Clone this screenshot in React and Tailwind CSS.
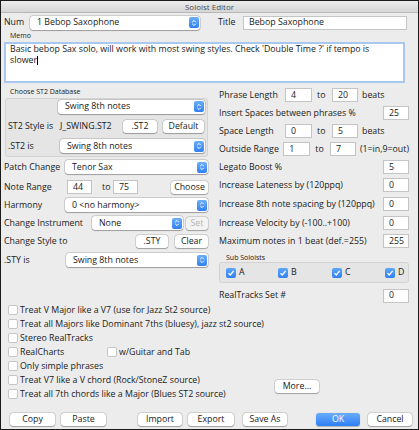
import React from "react";

function Stepper() {
  return (
    <span className="w-[10px] h-[11px] shrink-0 rounded-[2px] bg-gradient-to-b from-[#6caef9] to-[#2f80f4] flex items-center justify-center">
      <svg width="6" height="8" viewBox="0 0 6 8">
        <path d="M1.2 3.2 L3 1.4 L4.8 3.2 M1.2 4.8 L3 6.6 L4.8 4.8" stroke="white" strokeWidth="1" fill="none" />
      </svg>
    </span>
  );
}

function Select({ className, children }) {
  return (
    <div className={"h-[14px] shrink-0 bg-white rounded-[3px] shadow-[0_0_0_0.5px_rgba(0,0,0,0.22),0_0.5px_1px_rgba(0,0,0,0.25)] flex items-center pl-[7px] pr-[1px] " + className}>
      <span className="flex-1">{children}</span>
      <Stepper />
    </div>
  );
}

function Field({ className, children }) {
  return (
    <div className={"h-[14px] shrink-0 bg-white border border-[#c4c4c4] flex items-center pl-[5px] " + className}>
      {children}
    </div>
  );
}

function Btn({ className, children, disabled }) {
  return (
    <div
      className={
        "h-[13px] shrink-0 rounded-[3px] flex items-center justify-center shadow-[0_0_0_0.5px_rgba(0,0,0,0.2),0_0.5px_1px_rgba(0,0,0,0.25)] " +
        (disabled ? "bg-[#f3f3f3] text-[#b3b3b3] " : "bg-white ") +
        className
      }
    >
      {children}
    </div>
  );
}

function Check({ checked }) {
  if (checked) {
    return (
      <span className="w-[10px] h-[10px] shrink-0 rounded-[2px] bg-gradient-to-b from-[#5fa6f8] to-[#2f80f4] flex items-center justify-center">
        <svg width="8" height="8" viewBox="0 0 8 8">
          <path d="M1.5 4.2 L3.3 6 L6.6 1.8" stroke="white" strokeWidth="1.3" fill="none" />
        </svg>
      </span>
    );
  }
  return <span className="w-[10px] h-[10px] shrink-0 rounded-[2px] bg-white border border-[#c6c6c6]" />;
}

const options = [
  "Treat V Major like a V7 (use for Jazz St2 source)",
  "Treat all Majors like Dominant 7ths (bluesy), jazz st2 source)",
  "Stereo RealTracks",
  null,
  "Only simple phrases",
  "Treat V7 like a V chord (Rock/StoneZ source)",
  "Treat all 7th chords like a Major (Blues ST2 source)",
];

export default function App() {
  return (
    <div className="w-[419px] h-[430px] bg-[#ececec] border border-[#1a1a1a] flex flex-col overflow-hidden text-[8.8px] leading-[11px] text-[#1a1a1a] font-['Open_Sans',sans-serif] whitespace-nowrap">
      {/* Title bar */}
      <div className="h-[12px] shrink-0 bg-gradient-to-b from-[#ececec] to-[#d6d6d6] border-b border-[#b8b8b8] flex items-center justify-center text-[8px] text-[#4c4c4c]">
        Soloist Editor
      </div>

      <div className="flex-1 flex flex-col pl-[3px]">
        {/* Num / Title */}
        <div className="mt-[2px] h-[15px] flex items-center">
          <span className="w-[26px]">Num</span>
          <Select className="w-[170px]">1 Bebop Saxophone</Select>
          <span className="ml-[18px] w-[25px]">Title</span>
          <Field className="w-[164px]">Bebop Saxophone</Field>
        </div>

        {/* Memo */}
        <div className="h-[10px] flex items-center pl-[6px] text-[7px]">Memo</div>
        <div className="mt-[2px] h-[41px] w-[401px] bg-white border-2 border-[#a9c8f0] px-[4px] leading-[11px]">
          Basic bebop Sax solo, will work with most swing styles. Check 'Double Time ?' if tempo is
          <br />
          slower
          <span className="inline-block w-[1px] h-[9px] bg-black align-middle" />
        </div>

        {/* Two columns */}
        <div className="mt-[3px] flex">
          {/* Left */}
          <div className="w-[205px] flex flex-col">
            <div className="h-[11px] flex items-center pl-[6px] text-[7px]">Choose ST2 Database</div>
            <div className="mt-[1px] ml-[1px] w-[203px] h-[59px] bg-[#e5e5e5] border border-[#d3d3d3] rounded-[3px] flex flex-col">
              <div className="h-[15px] flex items-center pl-[52px]">
                <Select className="w-[147px]">Swing 8th notes</Select>
              </div>
              <div className="mt-[5px] h-[14px] flex items-center pl-[2px]">
                <span className="w-[52px]">ST2 Style is</span>
                <span className="w-[63px]">J_SWING.ST2</span>
                <Btn className="w-[34px]">.ST2</Btn>
                <Btn className="ml-[6px] w-[41px]">Default</Btn>
              </div>
              <div className="mt-[6px] h-[14px] flex items-center pl-[2px]">
                <span className="w-[52px]">.ST2 is</span>
                <Select className="w-[145px]">Swing 8th notes</Select>
              </div>
            </div>

            <div className="mt-[3px] h-[14px] flex items-center">
              <span className="w-[61px]">Patch Change</span>
              <Select className="w-[143px]">Tenor Sax</Select>
            </div>
            <div className="mt-[6px] h-[14px] flex items-center pr-[1px]">
              <span className="w-[63px]">Note Range</span>
              <Field className="w-[25px]">44</Field>
              <span className="ml-[10px] w-[11px]">to</span>
              <Field className="w-[25px]">75</Field>
              <Btn className="ml-auto w-[37px]">Choose</Btn>
            </div>
            <div className="mt-[4px] h-[14px] flex items-center">
              <span className="w-[61px]">Harmony</span>
              <Select className="w-[143px]">0 &lt;no harmony&gt;</Select>
            </div>
            <div className="mt-[4px] h-[14px] flex items-center">
              <span className="w-[88px]">Change Instrument</span>
              <Select className="w-[91px]">None</Select>
              <Btn disabled className="ml-[3px] w-[22px]">Set</Btn>
            </div>
            <div className="mt-[4px] h-[14px] flex items-center pr-[1px]">
              <span>Change Style to</span>
              <Btn className="ml-auto w-[32px]">.STY</Btn>
              <Btn className="ml-[7px] w-[33px]">Clear</Btn>
            </div>
            <div className="mt-[5px] h-[14px] flex items-center">
              <span className="w-[62px]">.STY is</span>
              <Select className="w-[142px]">Swing 8th notes</Select>
            </div>
          </div>

          {/* Right */}
          <div className="ml-[10px] w-[190px] flex flex-col">
            <div className="h-[18px] flex items-center">
              <span className="w-[66px]">Phrase Length</span>
              <Field className="w-[27px]">4</Field>
              <span className="ml-[5px] w-[15px]">to</span>
              <Field className="w-[26px]">20</Field>
              <span className="ml-[4px]">beats</span>
            </div>
            <div className="h-[18px] flex items-center">
              <span>Insert Spaces between phrases %</span>
              <Field className="ml-auto w-[26px]">25</Field>
            </div>
            <div className="h-[18px] flex items-center">
              <span className="w-[66px]">Space Length</span>
              <Field className="w-[27px]">0</Field>
              <span className="ml-[5px] w-[15px]">to</span>
              <Field className="w-[26px]">5</Field>
              <span className="ml-[4px]">beats</span>
            </div>
            <div className="h-[18px] flex items-center">
              <span className="w-[66px]">Outside Range</span>
              <Field className="w-[27px]">1</Field>
              <span className="ml-[5px] w-[15px]">to</span>
              <Field className="w-[26px]">7</Field>
              <span className="ml-[4px]">(1=in,9=out)</span>
            </div>
            <div className="h-[18px] flex items-center">
              <span>Legato Boost %</span>
              <Field className="ml-auto w-[26px]">5</Field>
            </div>
            <div className="h-[18px] flex items-center">
              <span>Increase Lateness by (120ppq)</span>
              <Field className="ml-auto w-[26px]">0</Field>
            </div>
            <div className="h-[20px] flex items-center">
              <span>Increase 8th note spacing by (120ppq)</span>
              <Field className="ml-auto w-[26px]">0</Field>
            </div>
            <div className="h-[18px] flex items-center">
              <span>Increase Velocity by (-100..+100)</span>
              <Field className="ml-auto w-[26px]">0</Field>
            </div>
            <div className="h-[18px] flex items-center">
              <span>Maximum notes in 1 beat (def.=255)</span>
              <Field className="ml-auto w-[26px]">255</Field>
            </div>
            <div className="mt-[2px] h-[10px] flex items-center pl-[7px] text-[7px]">Sub Soloists</div>
            <div className="h-[21px] w-[190px] bg-[#e5e5e5] border border-[#d3d3d3] rounded-[3px] flex items-center pl-[6px]">
              {["A", "B", "C", "D"].map((l, i) => (
                <div key={l} className={"flex items-center " + (i === 0 ? "w-[52px]" : i === 1 ? "w-[54px]" : i === 2 ? "w-[53px]" : "")}>
                  <Check checked />
                  <span className="ml-[3px]">{l}</span>
                </div>
              ))}
            </div>
            <div className="mt-[5px] h-[15px] flex items-center">
              <span>RealTracks Set #</span>
              <Field className="ml-auto w-[26px]">0</Field>
            </div>
          </div>
        </div>

        {/* Checkbox options */}
        <div className="flex pl-[4px]">
          <div className="w-[266px] flex flex-col">
            {options.map((o, i) =>
              o ? (
                <div key={i} className="h-[14px] flex items-center">
                  <Check />
                  <span className="ml-[2px]">{o}</span>
                </div>
              ) : (
                <div key={i} className="h-[14px] flex items-center">
                  <div className="w-[99px] flex items-center">
                    <Check />
                    <span className="ml-[2px]">RealCharts</span>
                  </div>
                  <Check />
                  <span className="ml-[2px]">w/Guitar and Tab</span>
                </div>
              )
            )}
          </div>
          <div className="ml-[1px] flex flex-col justify-end pb-[8px]">
            <Btn className="w-[44px]">More...</Btn>
          </div>
        </div>

        {/* Bottom buttons */}
        <div className="mt-[12px] h-[13px] flex items-center pl-[6px]">
          <Btn className="w-[45px]">Copy</Btn>
          <Btn className="ml-[6px] w-[45px]">Paste</Btn>
          <Btn className="ml-[32px] w-[44px]">Import</Btn>
          <Btn className="ml-[6px] w-[46px]">Export</Btn>
          <Btn className="ml-[9px] w-[44px]">Save As</Btn>
          <div className="ml-[29px] w-[44px] h-[13px] rounded-[3px] bg-gradient-to-b from-[#6aacf9] to-[#2c7ff5] text-white flex items-center justify-center shadow-[0_0.5px_1px_rgba(0,0,0,0.25)]">
            OK
          </div>
          <Btn className="ml-[8px] w-[44px]">Cancel</Btn>
        </div>
      </div>
    </div>
  );
}
